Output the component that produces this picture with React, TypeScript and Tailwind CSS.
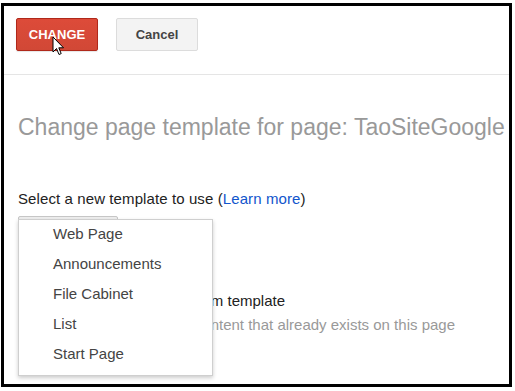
import React from "react";

export default function App() {
  const items = ["Web Page", "Announcements", "File Cabinet", "List", "Start Page"];
  return (
    <div className="w-[515px] h-[391px] bg-white overflow-hidden" style={{ fontFamily: '"Liberation Sans", Arial, sans-serif' }}>
      <div className="ml-[1px] mt-[3px] w-[511px] h-[384px] border-[3px] border-black relative overflow-hidden">
        <div className="h-[69px] border-b border-[#e5e5e5] px-[12px] pt-[12px] flex items-start gap-[18px] relative">
          <button className="h-[33px] w-[82px] rounded-[2px] border border-[#b0281a] bg-gradient-to-b from-[#dd4b39] to-[#d14836] text-white text-[13px] font-bold shadow-[0_1px_1px_rgba(0,0,0,0.1)]">
            CHANGE
          </button>
          <button className="h-[33px] w-[82px] rounded-[2px] border border-[#dcdcdc] bg-[#f3f3f3] text-[#444] text-[13px] font-bold">
            Cancel
          </button>
          <svg className="absolute left-[48px] top-[30px]" width="13" height="21" viewBox="0 0 13 21">
            <path d="M1 1 L1 16 L4.5 12.5 L7 18.5 L9.2 17.6 L6.8 11.8 L11.5 11.8 Z" fill="#fff" stroke="#000" strokeWidth="1" strokeLinejoin="round" />
          </svg>
        </div>
        <div className="px-[14px]">
          <div className="mt-[39px] text-[23px] leading-[26px] text-[#999] whitespace-nowrap">
            Change page template for page: TaoSiteGoogle
          </div>
          <div className="mt-[49px] text-[15px] leading-[20px] text-[#222] whitespace-nowrap tracking-[0.1px]">
            Select a new template to use (<span className="text-[#15c]">Learn more</span>)
          </div>
          <div className="mt-[7px] w-[100px] h-[28px] rounded-[2px] border border-[#c6c6c6] bg-[#eeeeee]" />
          <div className="mt-[45px] text-[15px] leading-[24px] whitespace-nowrap">
            <div className="w-[267px] text-right text-[#222]">Use custom template</div>
            <div className="w-[437px] text-right text-[#999]">Keep any content that already exists on this page</div>
          </div>
        </div>
        <div className="absolute left-[14px] top-[213px] w-[195px] h-[157px] bg-white border border-[#cfcfcf] shadow-[0_2px_4px_rgba(0,0,0,0.2)] flex flex-col">
          {items.map((t) => (
            <div key={t} className="h-[30px] leading-[28px] pl-[34px] text-[15px] text-[#444] whitespace-nowrap">
              {t}
            </div>
          ))}
        </div>
      </div>
    </div>
  );
}
